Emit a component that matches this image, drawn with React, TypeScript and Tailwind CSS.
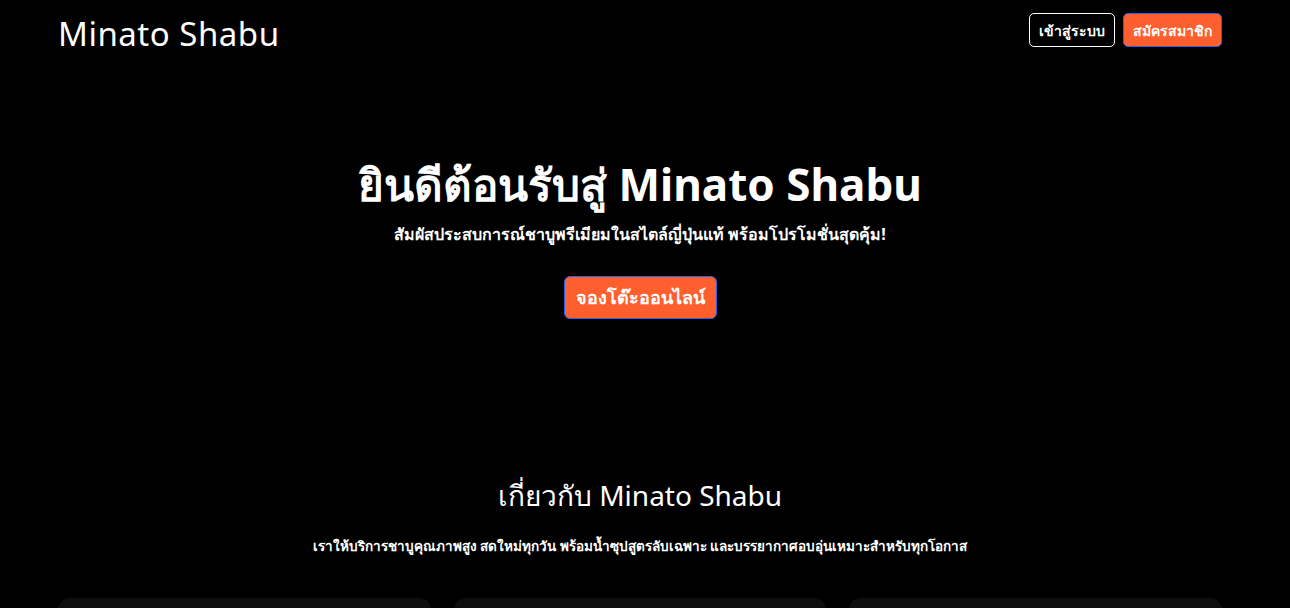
import React from 'react'

const font = { fontFamily: '"Comic Sans MS", "Noto Sans", "DejaVu Sans", sans-serif' }

const features = [
  { title: 'วัตถุดิบสดใหม่', text: 'คัดสรรเนื้อและผักคุณภาพทุกวัน' },
  { title: 'น้ำซุปสูตรลับ', text: 'เคี่ยวนานหลายชั่วโมงเพื่อรสชาติเข้มข้น' },
  { title: 'บรรยากาศอบอุ่น', text: 'เหมาะสำหรับครอบครัวและเพื่อนฝูง' },
]

export default function App() {
  return (
    <div className="min-h-screen bg-black text-white" style={font}>
      <div className="w-[1280px]">
        {/* Header */}
        <header className="w-[1164px] mx-auto flex items-start justify-between pt-[13px]">
          <h1 className="text-[33px] leading-[42px] tracking-[0.5px] font-normal">Minato Shabu</h1>
          <div className="flex items-center gap-2">
            <button className="h-[34px] px-[9px] rounded-[5px] border border-white text-white text-[14px] font-bold">
              เข้าสู่ระบบ
            </button>
            <button className="h-[34px] px-[9px] rounded-[5px] border border-[#2563eb] bg-[#ff5f2f] text-white text-[14px] font-bold">
              สมัครสมาชิก
            </button>
          </div>
        </header>

        {/* Hero */}
        <section className="flex flex-col items-center pt-[101px]">
          <h2 className="text-[44px] leading-[56px] font-bold">ยินดีต้อนรับสู่ Minato Shabu</h2>
          <p className="mt-[10px] text-[16px] font-bold">สัมผัสประสบการณ์ชาบูพรีเมียมในสไตล์ญี่ปุ่นแท้ พร้อมโปรโมชั่นสุดคุ้ม!</p>
          <button className="mt-[30px] w-[153px] h-[43px] rounded-[6px] border border-[#2563eb] bg-[#ff5f2f] text-white text-[18px] font-bold">
            จองโต๊ะออนไลน์
          </button>
        </section>

        {/* About */}
        <section className="flex flex-col items-center pt-[156px]">
          <h3 className="text-[28px] leading-[40px] font-normal">เกี่ยวกับ Minato Shabu</h3>
          <p className="mt-[21px] text-[13.5px] font-bold">
            เราให้บริการชาบูคุณภาพสูง สดใหม่ทุกวัน พร้อมน้ำซุปสูตรลับเฉพาะ และบรรยากาศอบอุ่นเหมาะสำหรับทุกโอกาส
          </p>
          <div className="w-[1164px] mt-[42px] grid grid-cols-3 gap-[23px]">
            {features.map((f) => (
              <div key={f.title} className="h-[180px] rounded-[12px] bg-[#0e0e0e] px-6 pt-10">
                <h4 className="text-[20px] font-bold">{f.title}</h4>
                <p className="mt-2 text-[14px] text-gray-300">{f.text}</p>
              </div>
            ))}
          </div>
        </section>
      </div>
    </div>
  )
}
